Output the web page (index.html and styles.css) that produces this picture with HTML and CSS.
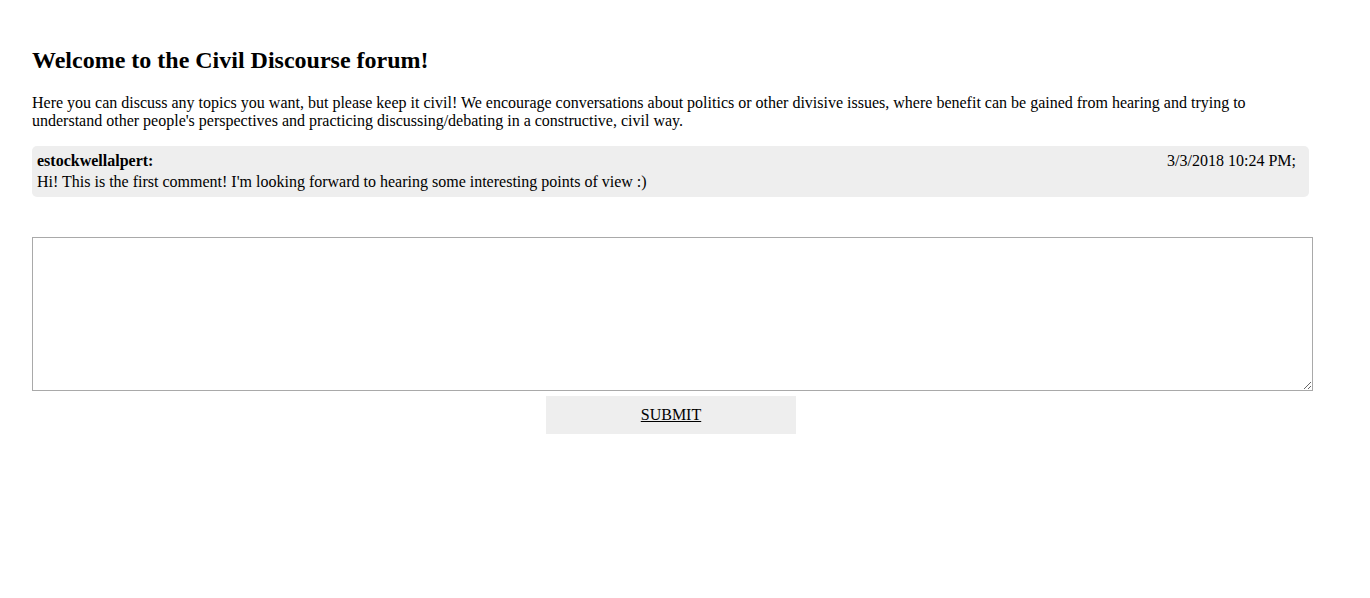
FILE: index.html
```html
<!DOCTYPE html>
<html>
<head>
<meta charset="utf-8">
<link rel="stylesheet" href="styles.css">
</head>
<body>
<div class="page">
  <h2 class="title">Welcome to the Civil Discourse forum!</h2>
  <p class="intro">Here you can discuss any topics you want, but please keep it civil! We encourage conversations about politics or other divisive issues, where benefit can be gained from hearing and trying to understand other people's perspectives and practicing discussing/debating in a constructive, civil way.</p>
  <div class="comment">
    <div class="comment-head">
      <span class="author">estockwellalpert:</span>
      <span class="date">3/3/2018 10:24 PM;</span>
    </div>
    <div class="comment-body">Hi! This is the first comment! I'm looking forward to hearing some interesting points of view :)</div>
  </div>
  <textarea class="entry"></textarea>
  <div class="actions">
    <a class="submit" href="#">SUBMIT</a>
  </div>
</div>
</body>
</html>
```
FILE: styles.css
```css
html, body {
  margin: 0;
  padding: 0;
  background: #fff;
}
body {
  font-family: "Liberation Serif", "Times New Roman", serif;
  font-size: 16px;
  color: #000;
}
.page {
  padding: 32px 57px 0 32px;
}
.title {
  font-size: 24px;
  font-weight: bold;
  margin: 14px 0 0 0;
  line-height: 28px;
}
.intro {
  margin: 20px 0 0 0;
  line-height: 18px;
}
.comment {
  margin-top: 16px;
  margin-right: 4px;
  background: #eee;
  border-radius: 5px;
  padding: 5px 13px 4px 5px;
}
.comment-head {
  display: flex;
  justify-content: space-between;
  line-height: 20px;
}
.author {
  font-weight: bold;
}
.comment-body {
  line-height: 22px;
}
.entry {
  display: block;
  box-sizing: border-box;
  width: 100%;
  height: 154px;
  margin: 40px 0 0 0;
  border: 1px solid #a9a9a9;
  padding: 2px;
  font-family: "Liberation Mono", monospace;
  font-size: 13px;
}
.actions {
  display: flex;
  justify-content: center;
  margin-top: 5px;
  padding-right: 3px;
}
.submit {
  display: block;
  width: 250px;
  height: 38px;
  line-height: 38px;
  text-align: center;
  background: #eee;
  color: #000;
  text-decoration: underline;
  font-size: 16px;
}
```
